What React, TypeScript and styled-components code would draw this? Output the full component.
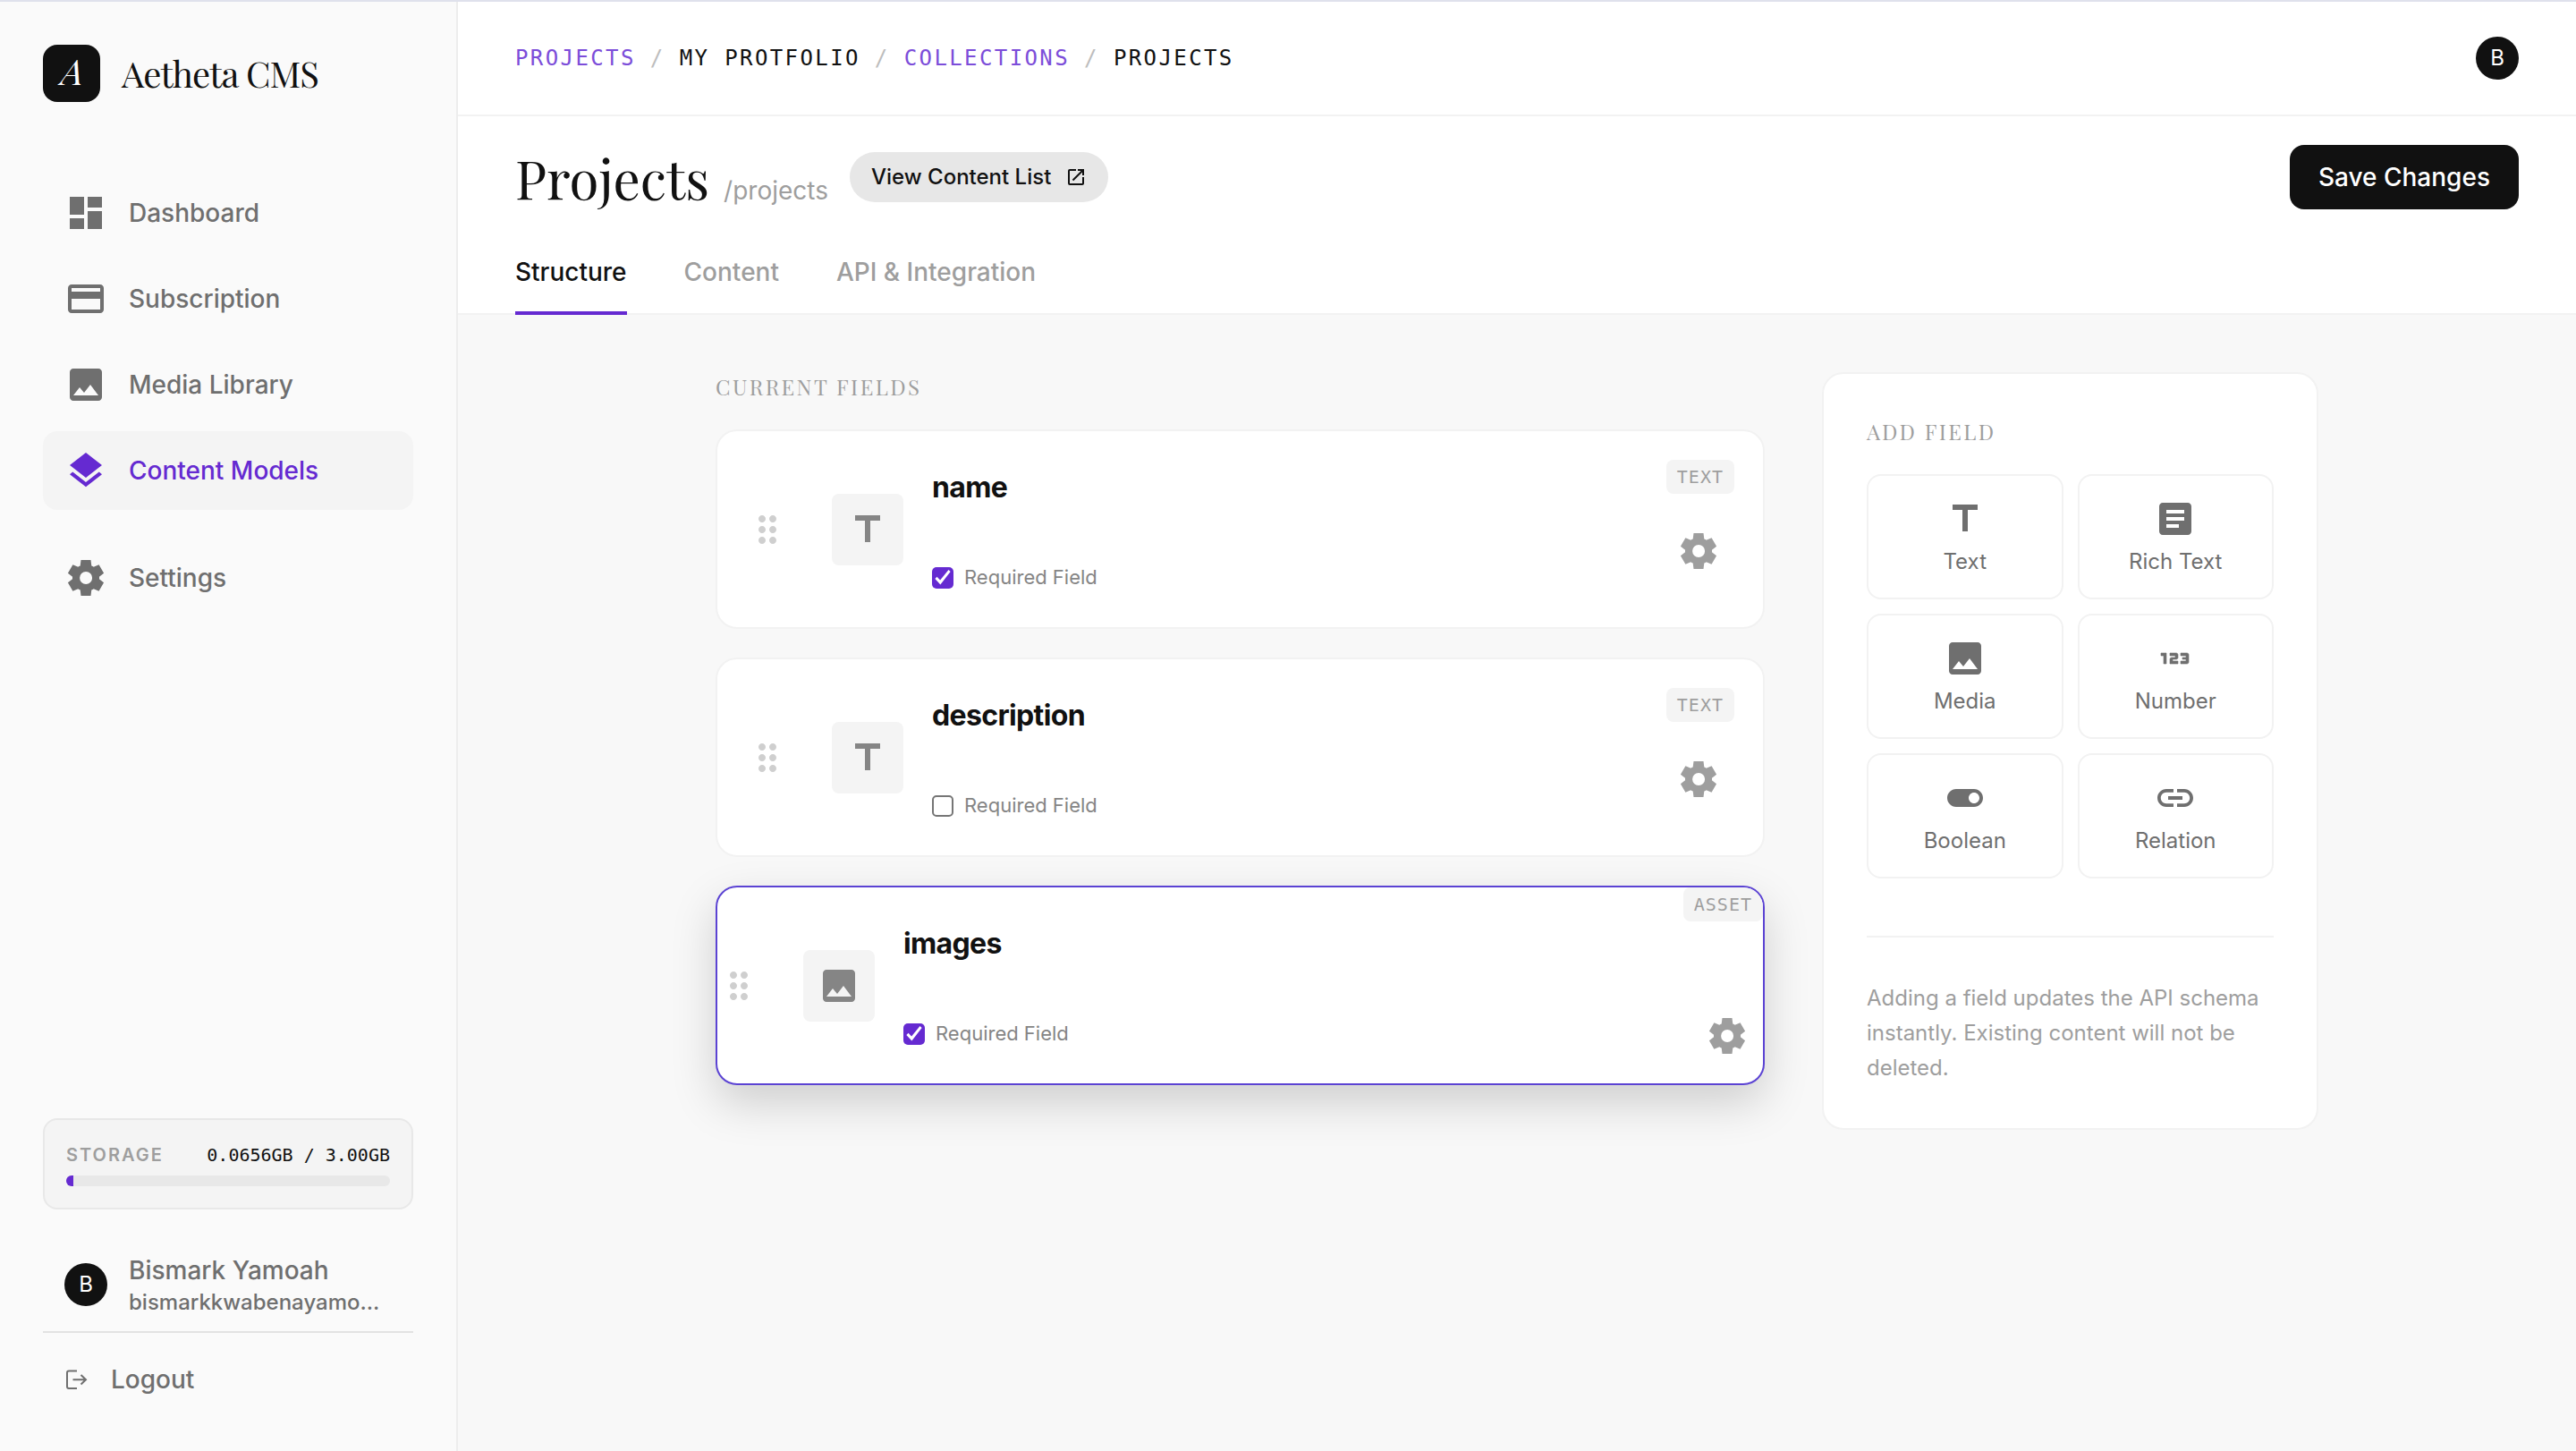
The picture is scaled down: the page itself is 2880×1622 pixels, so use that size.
import React, { useState } from "react";
import styled, { createGlobalStyle, css } from "styled-components";
import {
  Md123,
  MdArticle,
  MdCreditCard,
  MdDashboard,
  MdDragIndicator,
  MdImage,
  MdLayers,
  MdLink,
  MdOpenInNew,
  MdTitle,
  MdToggleOn,
} from "react-icons/md";

const color = {
  ink: "#111111",
  nav: "#6f6f6f",
  label: "#858585",
  muted: "#9e9e9e",
  faint: "#cfcfcf",
  line: "#f2f2f2",
  edge: "#e8e8e8",
  chip: "#f4f4f4",
  accent: "#652ad1",
  accentSoft: "#7c4dd9",
  page: "#f8f8f8",
  side: "#fafafa",
};

const serif = `"Playfair Display", "Liberation Serif", serif`;
const mono = `"DejaVu Sans Mono", monospace`;

const GlobalStyle = createGlobalStyle`
  *, *::before, *::after { box-sizing: border-box; }
  body {
    margin: 0;
    background: ${color.page};
    color: ${color.ink};
    font-family: Inter, "Liberation Sans", sans-serif;
    font-size: 28px;
    -webkit-font-smoothing: antialiased;
  }
  button, input { font: inherit; color: inherit; }
  button { border: 0; padding: 0; background: none; cursor: pointer; }
  a { color: inherit; text-decoration: none; }
  h1, h2, p, ul, ol { margin: 0; padding: 0; }
  ul, ol { list-style: none; }
  svg { display: block; flex: none; }
`;

const Page = styled.div`
  display: flex;
  min-height: 100vh;
  border-top: 2px solid #dfe1ec;
`;

/* Sidebar */

const Sidebar = styled.aside`
  display: flex;
  flex-direction: column;
  flex: none;
  width: 512px;
  padding: 48px 48px 36px;
  background: ${color.side};
  border-right: 2px solid #ededed;
`;

const Brand = styled.a`
  display: flex;
  align-items: center;
  gap: 24px;
  margin-bottom: 80px;
  font-family: ${serif};
  font-size: 40px;
  line-height: 64px;
  letter-spacing: -0.025em;
`;

const BrandMark = styled.span`
  width: 64px;
  height: 64px;
  border-radius: 16px;
  background: ${color.ink};
  color: #fff;
  font-style: italic;
  line-height: 58px;
  text-align: center;
`;

const Nav = styled.nav`
  display: flex;
  flex-direction: column;
  gap: 8px;
`;

const NavGap = styled.div`
  height: 16px;
`;

const NavItem = styled.a<{ $active?: boolean }>`
  display: flex;
  align-items: center;
  gap: 24px;
  padding: 20px 24px;
  border-radius: 16px;
  font-weight: 500;
  line-height: 40px;
  color: ${(p) => (p.$active ? color.accent : color.nav)};
  background: ${(p) => (p.$active ? color.chip : "transparent")};
`;

const SidebarFoot = styled.div`
  display: flex;
  flex-direction: column;
  margin-top: auto;
`;

const Storage = styled.section`
  padding: 24px;
  border: 2px solid ${color.edge};
  border-radius: 16px;
  background: ${color.chip};
`;

const StorageRow = styled.div`
  display: flex;
  justify-content: space-between;
  margin-bottom: 8px;
  font-size: 20px;
  line-height: 30px;
`;

const StorageLabel = styled.span`
  font-weight: 600;
  letter-spacing: 0.1em;
  color: ${color.muted};
`;

const StorageValue = styled.span`
  font-family: ${mono};
`;

const Meter = styled.div`
  height: 12px;
  border-radius: 6px;
  background: ${color.edge};
  overflow: hidden;
`;

const MeterFill = styled.div`
  height: 100%;
  background: ${color.accent};
`;

const User = styled.div`
  display: flex;
  align-items: center;
  gap: 24px;
  margin-top: 24px;
  padding: 24px 24px 16px;
  border-bottom: 2px solid #e2e2e2;
  color: ${color.nav};
  font-weight: 500;
`;

const UserName = styled.div`
  line-height: 40px;
`;

const UserMail = styled.div`
  font-size: 24px;
  line-height: 32px;
`;

const Avatar = styled.span`
  flex: none;
  width: 48px;
  border-radius: 50%;
  background: ${color.ink};
  color: #fff;
  font-size: 24px;
  font-weight: 400;
  line-height: 48px;
  text-align: center;
`;

const Logout = styled.button`
  display: flex;
  align-items: center;
  gap: 24px;
  margin-top: 8px;
  padding: 24px;
  color: ${color.nav};
  font-weight: 500;
  line-height: 40px;
`;

/* Main column */

const Main = styled.main`
  display: flex;
  flex-direction: column;
  flex: 1;
  min-width: 0;
`;

const TopBar = styled.header`
  display: flex;
  align-items: center;
  justify-content: space-between;
  padding: 39px 64px;
  background: #fff;
  border-bottom: 2px solid ${color.line};
`;

const Crumbs = styled.ol`
  display: flex;
  gap: 16px;
  font-family: ${mono};
  font-size: 24px;
  line-height: 48px;
  letter-spacing: 0.1em;
  text-transform: uppercase;
`;

const Crumb = styled.li`
  display: flex;
  gap: 16px;

  & + &::before {
    content: "/";
    color: #bdbdbd;
  }

  a {
    color: ${color.accentSoft};
  }
`;

const Heading = styled.div`
  padding: 32px 64px 0;
  background: #fff;
  border-bottom: 2px solid ${color.line};
`;

const TitleRow = styled.div`
  display: flex;
  align-items: center;
  justify-content: space-between;
  margin-bottom: 48px;
`;

const TitleGroup = styled.div`
  display: flex;
  align-items: center;
  gap: 24px;
`;

const TitleText = styled.div`
  display: flex;
  align-items: baseline;
  gap: 16px;
`;

const Title = styled.h1`
  font-family: ${serif};
  font-size: 60px;
  font-weight: 400;
  line-height: 72px;
`;

const Slug = styled.span`
  color: ${color.muted};
`;

const PillButton = styled.button`
  display: flex;
  align-items: center;
  gap: 16px;
  padding: 0 24px;
  border-radius: 28px;
  background: #e7e7e7;
  font-size: 24px;
  font-weight: 500;
  line-height: 56px;
`;

const SaveButton = styled.button`
  padding: 0 32px;
  border-radius: 16px;
  background: ${color.ink};
  color: #fff;
  font-weight: 500;
  line-height: 72px;
`;

const Tabs = styled.div`
  display: flex;
  gap: 64px;
  margin-bottom: -2px;
`;

const Tab = styled.button<{ $active?: boolean }>`
  padding-bottom: 22px;
  border-bottom: 4px solid ${(p) => (p.$active ? color.accent : "transparent")};
  color: ${(p) => (p.$active ? color.ink : color.muted)};
  font-weight: 500;
  line-height: 44px;
`;

const Content = styled.div`
  display: grid;
  grid-template-columns: minmax(0, 1fr) 555px;
  align-items: start;
  gap: 64px;
  width: 100%;
  max-width: 1920px;
  margin: 0 auto;
  padding: 64px;
`;

const SectionTitle = styled.h2`
  margin-bottom: 32px;
  font-family: ${serif};
  font-size: 24px;
  font-weight: 400;
  line-height: 32px;
  letter-spacing: 0.1em;
  text-transform: uppercase;
  color: ${color.muted};
`;

/* Field cards */

const FieldList = styled.ul`
  display: flex;
  flex-direction: column;
  gap: 32px;
`;

const FieldSide = styled.div`
  display: flex;
  flex-direction: column;
  align-items: flex-end;
  align-self: stretch;
  justify-content: space-between;
  padding: 32px 0 45px;
`;

const FieldCard = styled.li<{ $dragging?: boolean }>`
  display: flex;
  align-items: center;
  padding: 0 32px;
  border: 2px solid ${color.line};
  border-radius: 24px;
  background: #fff;

  ${(p) =>
    p.$dragging &&
    css`
      padding: 0;
      border-color: #5b43d3;
      box-shadow: 0 20px 50px rgba(0, 0, 0, 0.17);
      overflow: hidden;

      ${FieldSide} {
        padding: 0 0 13px;
      }
    `}
`;

const DragHandle = styled.button`
  margin-right: 48px;
  color: ${color.faint};
  cursor: grab;
`;

const FieldIcon = styled.span`
  display: grid;
  place-items: center;
  width: 80px;
  height: 80px;
  margin-right: 32px;
  border-radius: 8px;
  background: ${color.chip};
  color: ${color.label};
`;

const FieldBody = styled.div`
  display: flex;
  flex-direction: column;
  flex: 1;
  gap: 48px;
  min-width: 0;
  padding: 32px 0;
`;

const FieldName = styled.input`
  width: 100%;
  height: 60px;
  padding: 0;
  border: 0;
  outline: 0;
  background: transparent;
  font-size: 32px;
  font-weight: 700;
  letter-spacing: -0.02em;
`;

const RequiredLabel = styled.label`
  display: flex;
  align-items: center;
  align-self: flex-start;
  gap: 12px;
  font-size: 22px;
  line-height: 47px;
  color: ${color.label};
`;

const Checkbox = styled.input`
  appearance: none;
  flex: none;
  width: 24px;
  height: 24px;
  margin: 0;
  border: 2px solid #767676;
  border-radius: 5px;
  background: #fff;

  &:checked {
    border: 0;
    background: ${color.accent};
  }

  &:checked::before {
    content: "";
    display: block;
    height: 24px;
    background: #fff;
    clip-path: polygon(14% 56%, 23% 47%, 38% 62%, 77% 15%, 86% 23%, 39% 83%);
  }
`;

const TypeBadge = styled.span`
  padding: 0 12px;
  border-radius: 8px;
  background: ${color.chip};
  color: ${color.muted};
  font-family: ${mono};
  font-size: 20px;
  line-height: 38px;
  letter-spacing: 1px;
  text-transform: uppercase;
`;

const GearButton = styled.button`
  padding: 16px;
  color: ${color.muted};
`;

/* Add-field panel */

const Panel = styled.section`
  padding: 48px;
  border: 2px solid ${color.line};
  border-radius: 24px;
  background: #fff;
`;

const TypeGrid = styled.div`
  display: grid;
  grid-template-columns: repeat(2, 1fr);
  gap: 16px;
`;

const TypeTile = styled.button`
  display: flex;
  flex-direction: column;
  align-items: center;
  gap: 8px;
  padding: 24px;
  border: 2px solid ${color.line};
  border-radius: 16px;
  color: ${color.nav};
  font-size: 24px;
  line-height: 32px;
`;

const BoldDigits = styled(Md123)`
  path:not([fill="none"]) {
    stroke: currentColor;
    stroke-width: 0.3;
  }
`;

const PanelNote = styled.p`
  margin-top: 64px;
  padding-top: 48px;
  border-top: 2px solid ${color.line};
  color: ${color.muted};
  font-size: 24px;
  line-height: 39px;
`;

const GearIcon = () => (
  <svg width="48" height="48" viewBox="0 0 24 24" fill="currentColor" aria-hidden="true">
    <path d="m9.25 22-.4-3.2q-.325-.125-.612-.3-.288-.175-.563-.375L4.7 19.375l-2.75-4.75 2.575-1.95Q4.5 12.5 4.5 12.337v-.675q0-.162.025-.337L1.95 9.375l2.75-4.75 2.975 1.25q.275-.2.575-.375.3-.175.6-.3l.4-3.2h5.5l.4 3.2q.325.125.613.3.287.175.562.375l2.975-1.25 2.75 4.75-2.575 1.95q.025.175.025.338v.674q0 .163-.05.338l2.575 1.95-2.75 4.75-2.95-1.25q-.275.2-.575.375-.3.175-.6.3l-.4 3.2Zm2.8-6.5q1.45 0 2.475-1.025Q15.55 13.45 15.55 12q0-1.45-1.025-2.475Q13.5 8.5 12.05 8.5q-1.475 0-2.488 1.025Q8.55 10.55 8.55 12q0 1.45 1.012 2.475Q10.575 15.5 12.05 15.5Z" />
  </svg>
);

const LogoutIcon = () => (
  <svg
    width="28"
    height="28"
    viewBox="0 0 28 28"
    fill="none"
    stroke="currentColor"
    strokeWidth="2"
    aria-hidden="true"
  >
    <path d="M14 4.5H5Q3 4.500 3 6.500V22q0 2 2 2H14M9.500 14.250H24M18.500 9l5.500 5.250-5.500 5.250" />
  </svg>
);

const navItems = [
  { label: "Dashboard", icon: <MdDashboard size={48} /> },
  { label: "Subscription", icon: <MdCreditCard size={48} /> },
  { label: "Media Library", icon: <MdImage size={48} /> },
  { label: "Content Models", icon: <MdLayers size={48} />, active: true },
];

const crumbs = [
  { label: "Projects", link: true },
  { label: "My Protfolio" },
  { label: "Collections", link: true },
  { label: "Projects" },
];

const tabs = ["Structure", "Content", "API & Integration"];

const fieldTypes = [
  { label: "Text", icon: <MdTitle size={48} /> },
  { label: "Rich Text", icon: <MdArticle size={48} /> },
  { label: "Media", icon: <MdImage size={48} /> },
  { label: "Number", icon: <BoldDigits size={48} /> },
  { label: "Boolean", icon: <MdToggleOn size={48} /> },
  { label: "Relation", icon: <MdLink size={48} /> },
];

const fields = [
  { name: "name", type: "Text", required: true },
  { name: "description", type: "Text", required: false },
  { name: "images", type: "Asset", required: true, dragging: true },
];

const storage = { used: 0.0656, total: 3 };

export default function App() {
  const [tab, setTab] = useState(tabs[0]);

  return (
    <>
      <GlobalStyle />
      <Page>
        <Sidebar>
          <Brand href="#">
            <BrandMark>A</BrandMark>
            Aetheta CMS
          </Brand>
          <Nav>
            {navItems.map((item) => (
              <NavItem key={item.label} href="#" $active={item.active}>
                {item.icon}
                {item.label}
              </NavItem>
            ))}
            <NavGap />
            <NavItem href="#">
              <GearIcon />
              Settings
            </NavItem>
          </Nav>
          <SidebarFoot>
            <Storage>
              <StorageRow>
                <StorageLabel>STORAGE</StorageLabel>
                <StorageValue>
                  {`${storage.used}GB / ${storage.total.toFixed(2)}GB`}
                </StorageValue>
              </StorageRow>
              <Meter>
                <MeterFill style={{ width: `${(storage.used / storage.total) * 100}%` }} />
              </Meter>
            </Storage>
            <User>
              <Avatar>B</Avatar>
              <div>
                <UserName>Bismark Yamoah</UserName>
                <UserMail>bismarkkwabenayamo...</UserMail>
              </div>
            </User>
            <Logout>
              <LogoutIcon />
              Logout
            </Logout>
          </SidebarFoot>
        </Sidebar>

        <Main>
          <TopBar>
            <Crumbs>
              {crumbs.map((c, i) => (
                <Crumb key={i}>{c.link ? <a href="#">{c.label}</a> : <span>{c.label}</span>}</Crumb>
              ))}
            </Crumbs>
            <Avatar>B</Avatar>
          </TopBar>

          <Heading>
            <TitleRow>
              <TitleGroup>
                <TitleText>
                  <Title>Projects</Title>
                  <Slug>/projects</Slug>
                </TitleText>
                <PillButton>
                  View Content List
                  <MdOpenInNew size={24} />
                </PillButton>
              </TitleGroup>
              <SaveButton>Save Changes</SaveButton>
            </TitleRow>
            <Tabs role="tablist">
              {tabs.map((t) => (
                <Tab
                  key={t}
                  role="tab"
                  aria-selected={t === tab}
                  $active={t === tab}
                  onClick={() => setTab(t)}
                >
                  {t}
                </Tab>
              ))}
            </Tabs>
          </Heading>

          <Content>
            <section>
              <SectionTitle>Current Fields</SectionTitle>
              <FieldList>
                {fields.map((f) => (
                  <FieldCard key={f.name} $dragging={f.dragging}>
                    <DragHandle aria-label={`Reorder ${f.name}`}>
                      <MdDragIndicator size={48} />
                    </DragHandle>
                    <FieldIcon>
                      {f.type === "Asset" ? <MdImage size={48} /> : <MdTitle size={48} />}
                    </FieldIcon>
                    <FieldBody>
                      <FieldName aria-label="Field name" defaultValue={f.name} />
                      <RequiredLabel>
                        <Checkbox type="checkbox" defaultChecked={f.required} />
                        Required Field
                      </RequiredLabel>
                    </FieldBody>
                    <FieldSide>
                      <TypeBadge>{f.type}</TypeBadge>
                      <GearButton aria-label={`Settings for ${f.name}`}>
                        <GearIcon />
                      </GearButton>
                    </FieldSide>
                  </FieldCard>
                ))}
              </FieldList>
            </section>

            <Panel>
              <SectionTitle>Add Field</SectionTitle>
              <TypeGrid>
                {fieldTypes.map((t) => (
                  <TypeTile key={t.label}>
                    {t.icon}
                    {t.label}
                  </TypeTile>
                ))}
              </TypeGrid>
              <PanelNote>
                Adding a field updates the API schema instantly. Existing content will not be
                deleted.
              </PanelNote>
            </Panel>
          </Content>
        </Main>
      </Page>
    </>
  );
}
